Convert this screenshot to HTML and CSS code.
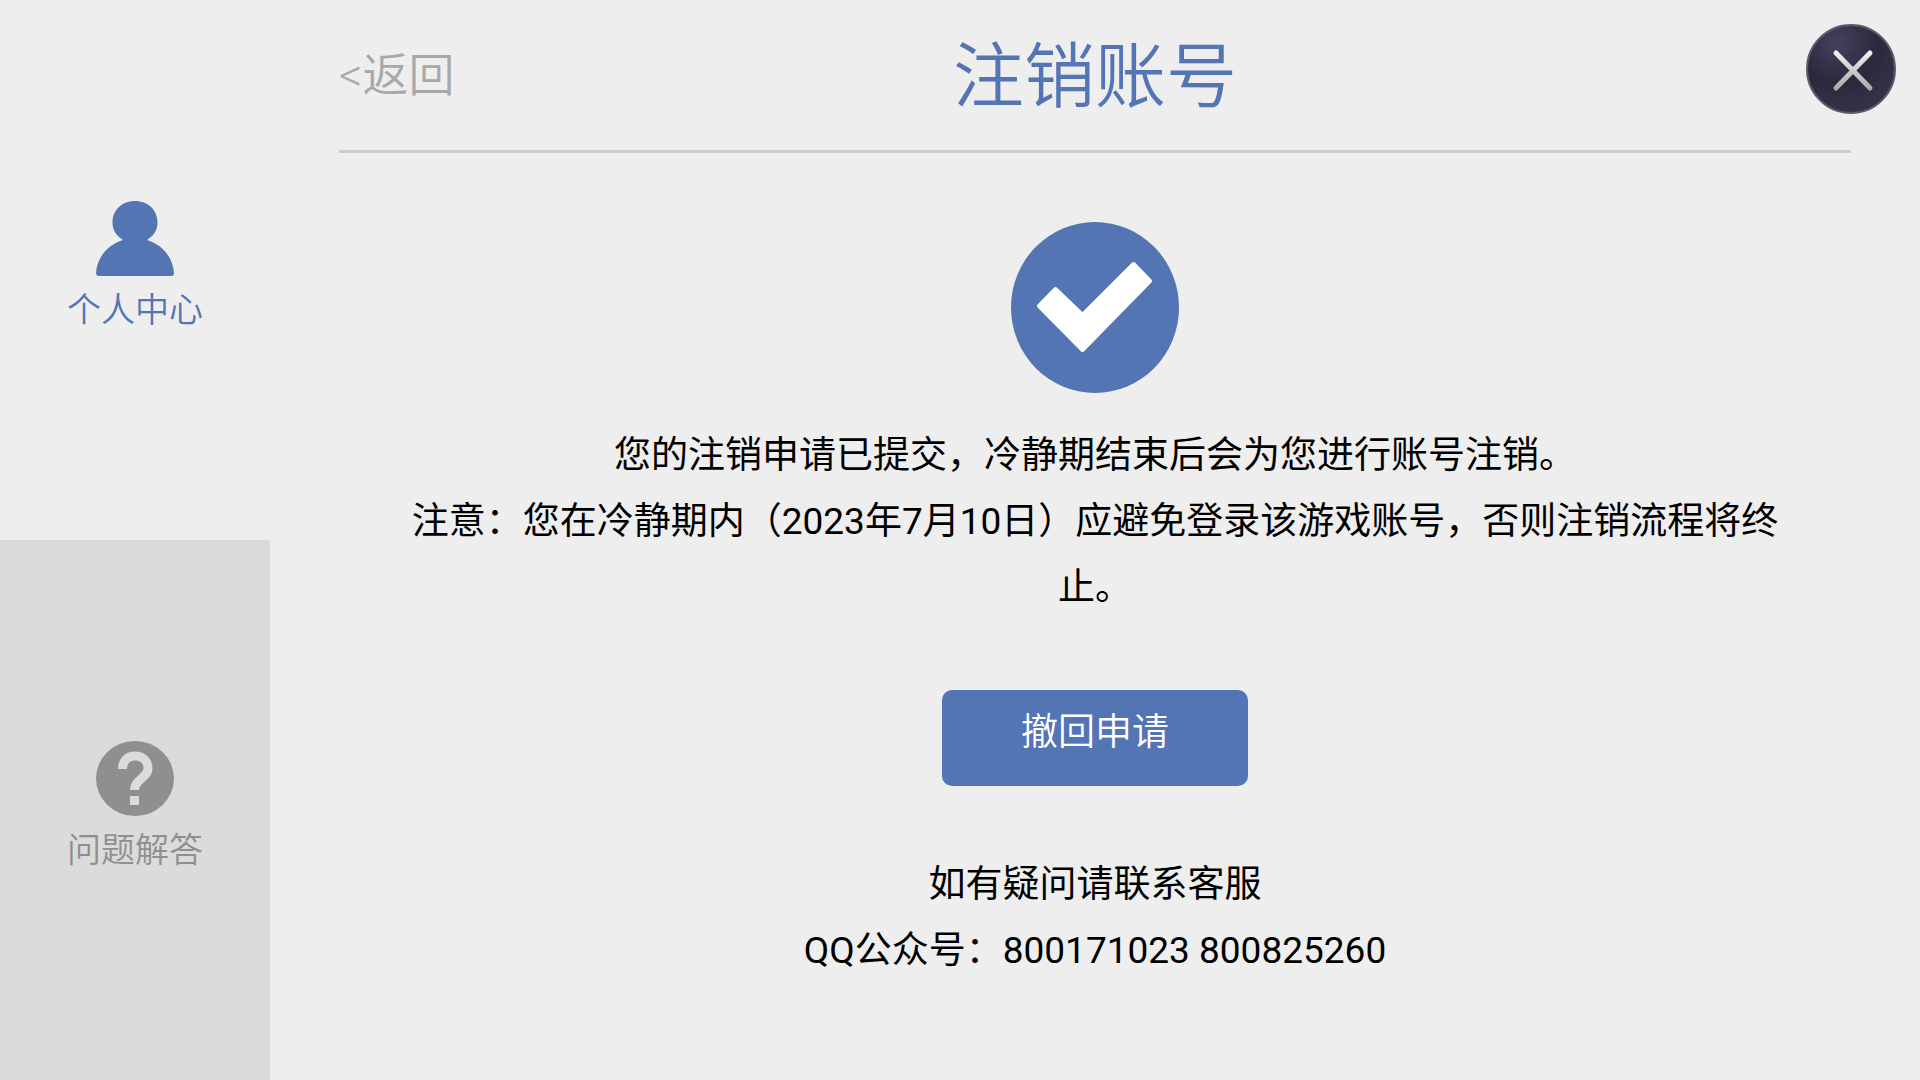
FILE: index.html
```html
<!DOCTYPE html>
<html lang="zh-CN">
<head>
    <meta charset="UTF-8">
    <meta name="viewport" content="width=device-width, initial-scale=1.0">
    <title>注销账号</title>
    <link rel="stylesheet" href="styles.css">
</head>
<body>
    <nav class="sidebar">
        <a class="side-item active" href="#">
            <svg class="side-icon" viewBox="0 0 78 75">
                <path d="M27 39C19 34 16.500 28 16.500 21.500C16.500 9 26 0 39 0S61.500 9 61.500 21.500C61.500 28 59 34 51 39C67 44 77 57 78 72Q78 75 75 75H3Q0 75 0 72C1 57 11 44 27 39Z" fill="currentColor"/>
            </svg>
            <span>个人中心</span>
        </a>
        <a class="side-item" href="#">
            <svg class="side-icon" viewBox="0 0 78 75">
                <ellipse cx="39" cy="37.500" rx="39" ry="37.500" fill="currentColor"/>
                <path d="M26.500 28C26.500 20 31 15 39 15S52 20 52 27.500C52 37 38.500 38 38.500 49" fill="none" stroke="#dbdbdb" stroke-width="9"/>
                <rect x="34" y="55" width="9" height="9" fill="#dbdbdb"/>
            </svg>
            <span>问题解答</span>
        </a>
    </nav>
    <main class="main">
        <header class="header">
            <a class="back" href="#">&lt;返回</a>
            <h1>注销账号</h1>
        </header>
        <section class="content">
            <svg class="check" viewBox="0 0 168 171">
                <ellipse cx="84" cy="85.500" rx="84" ry="85.500" fill="#5375b4"/>
                <path d="M28 84L44.500 67L71.500 93L122.500 42L139 59L71.500 128Z" fill="#fff" stroke="#fff" stroke-width="4" stroke-linejoin="round"/>
            </svg>
            <p>您的注销申请已提交，冷静期结束后会为您进行账号注销。</p>
            <p>注意：您在冷静期内（2023年7月10日）应避免登录该游戏账号，否则注销流程将终止。</p>
            <button type="button" class="revoke">撤回申请</button>
            <p>如有疑问请联系客服</p>
            <p>QQ公众号：800171023 800825260</p>
        </section>
    </main>
    <button type="button" class="close" aria-label="关闭">
        <svg viewBox="0 0 90 90">
            <defs>
                <radialGradient id="ball" cx="0.35" cy="0.2" r="0.75">
                    <stop offset="0" stop-color="#464060"/>
                    <stop offset="0.6" stop-color="#2c283b"/>
                    <stop offset="1" stop-color="#353047"/>
                </radialGradient>
                <linearGradient id="cross" gradientUnits="userSpaceOnUse" x1="0" y1="27" x2="0" y2="66">
                    <stop offset="0" stop-color="#f2f2f2"/>
                    <stop offset="1" stop-color="#a8a8a8"/>
                </linearGradient>
            </defs>
            <circle cx="45" cy="45" r="44" fill="url(#ball)" stroke="#5e5b68" stroke-width="2"/>
            <path d="M30 29L64 64M64 29L30 64" stroke="url(#cross)" stroke-width="5" stroke-linecap="round"/>
        </svg>
    </button>
</body>
</html>
```

FILE: styles.css
```css
body {
    display: flex;
    min-height: 100vh;
    margin: 0;
    background-color: #eee;
    color: #000;
    font-family: Roboto, "Noto Sans CJK SC", sans-serif;
    font-size: 37px;
    line-height: 66px;
}

a {
    text-decoration: none;
}

/* 左侧菜单 */
.sidebar {
    display: flex;
    flex-direction: column;
    flex: 0 0 270px;
}

.side-item {
    flex: 1;
    display: flex;
    flex-direction: column;
    align-items: center;
    padding-top: 201px;
    box-sizing: border-box;
    background-color: #dbdbdb;
    color: #8f8f8f;
    font-size: 34px;
    font-weight: 350;
    line-height: 68px;
}

.side-item.active {
    background-color: #eee;
    color: #5375b4;
}

.side-icon {
    width: 78px;
    height: 75px;
}

/* 右侧内容 */
.main {
    flex: 1;
    padding: 0 69px;
}

.header {
    display: grid;
    grid-template-columns: 1fr auto 1fr;
    align-items: center;
    height: 150px;
    border-bottom: 3px solid #cdcdcd;
}

.back {
    color: #a8a8a8;
    font-size: 46px;
    font-weight: 350;
}

h1 {
    margin: 0;
    padding-top: 4px;
    color: #5375b4;
    font-size: 71px;
    font-weight: 350;
}

.content {
    display: flex;
    flex-direction: column;
    align-items: center;
    padding: 69px 60px 0;
    text-align: center;
}

.content p {
    margin: 0;
}

.check {
    width: 168px;
    height: 171px;
    margin-bottom: 30px;
}

.revoke {
    width: 306px;
    height: 96px;
    margin: 69px 0 66px;
    padding: 0 0 10px;
    border: none;
    border-radius: 10px;
    background-color: #5375b4;
    color: #fff;
    font: inherit;
    font-weight: 350;
}

/* 关闭按钮浮在右上角 */
.close {
    position: absolute;
    top: 24px;
    right: 24px;
    width: 90px;
    height: 90px;
    padding: 0;
    border: none;
    background: none;
}

.close svg {
    display: block;
}
```
